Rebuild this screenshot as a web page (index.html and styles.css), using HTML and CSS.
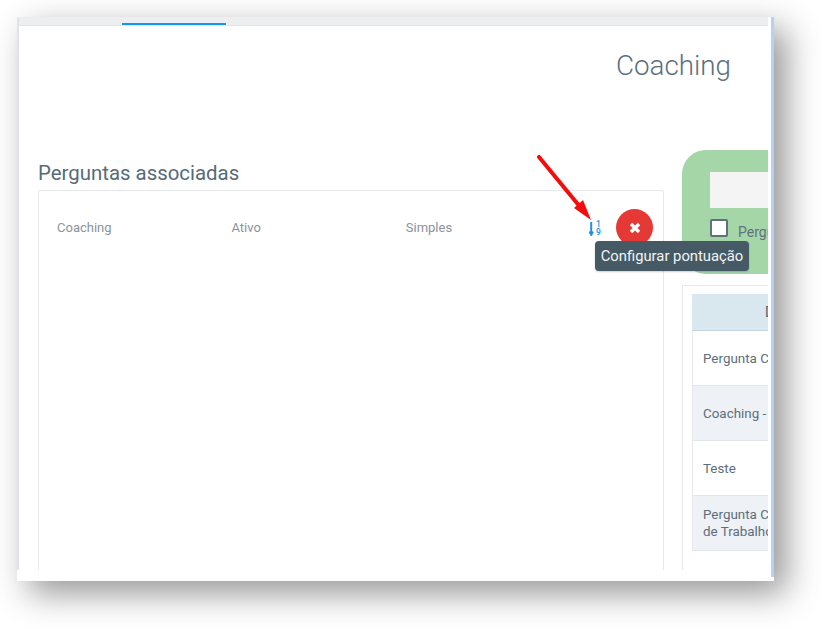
FILE: index.html
```html
<!DOCTYPE html>
<html lang="pt">
<head>
<meta charset="utf-8">
<title>Coaching</title>
<link rel="stylesheet" href="styles.css">
</head>
<body>
<div class="shot">
  <div class="page">
    <div class="tabs"><div class="tab-active"></div></div>
    <div class="title-row"><h1 class="title">Coaching</h1></div>
    <div class="columns">
      <section class="left">
        <h2 class="heading">Perguntas associadas</h2>
        <div class="card">
          <div class="row">
            <span class="cell">Coaching</span>
            <span class="cell">Ativo</span>
            <span class="cell">Simples</span>
            <svg class="sort-icon" width="14" height="16" viewBox="0 0 14 16">
              <path class="sort-arrow" d="M2.2 2V14.5M0.4 11.5L2.2 14.8L4 11.5"/>
              <text class="sort-num" x="7" y="6.5">1</text>
              <text class="sort-num" x="7" y="14.8">9</text>
            </svg>
            <button class="del" type="button">
              <svg width="12" height="12" viewBox="0 0 12 12"><path class="del-x" d="M2 2L10 10M10 2L2 10"/></svg>
            </button>
          </div>
        </div>
      </section>
      <section class="right">
        <div class="filter">
          <div class="filter-input"></div>
          <label class="check-row"><span class="check"></span><span class="check-label">Pergunta</span></label>
        </div>
        <div class="table-card">
          <div class="t-head">Descrição</div>
          <div class="t-row">Pergunta Coaching</div>
          <div class="t-row alt">Coaching - Teste</div>
          <div class="t-row">Teste</div>
          <div class="t-row alt">Pergunta Coaching<br>de Trabalho</div>
        </div>
      </section>
    </div>
    <div class="tooltip">Configurar pontuação</div>
    <svg class="arrow" width="60" height="70" viewBox="0 0 60 70">
      <path class="arrow-line" d="M2 2L44 53"/>
      <path class="arrow-head" d="M54 65L37 53L46 45Z"/>
    </svg>
  </div>
  <div class="edge"></div>
</div>
</body>
</html>
```
FILE: styles.css
```css
* { box-sizing: border-box; }
html, body { margin: 0; height: 100%; background: #fff; overflow: hidden; }
body { padding: 17px 0 0 17px; font-family: Roboto, "Liberation Sans", sans-serif; color: #6b7a85; }

.shot {
  display: flex;
  align-items: flex-start;
  width: 757px;
  height: 564px;
  background: #fff;
  box-shadow: 12px 12px 32px rgba(0, 0, 0, 0.42);
}
.page {
  position: relative;
  width: 751px;
  height: 553px;
  overflow: hidden;
  background: #fff;
  border-left: 2px solid #e2e3ea;
}
.edge {
  width: 3px;
  height: 560px;
  margin-left: 3px;
  background: #b9d0f5;
}

.tabs {
  height: 9px;
  background: #eceef0;
  border-bottom: 1px solid #e0e5ea;
  padding-left: 103px;
}
.tab-active { width: 104px; height: 8px; border-bottom: 2px solid #0f9af0; }

.title-row { display: flex; justify-content: flex-end; padding: 23px 37px 0 0; height: 124px; }
.title { margin: 0; font-size: 27.8px; line-height: 33px; font-weight: 300; color: #5c6f7d; }

.columns { display: flex; padding-left: 19px; gap: 18px; }
.left { width: 626px; flex: none; }
.heading { margin: 0 0 5px; padding-top: 11px; font-size: 20.4px; line-height: 24px; font-weight: 400; color: #566b78; }
.card {
  height: 400px;
  border: 1px solid #e6e9ec;
  border-radius: 2px;
  padding: 18px 10px 0 18px;
}
.row { display: flex; align-items: center; height: 37px; font-size: 13px; color: #8a949c; }
.cell { width: 174.4px; flex: none; }
.sort-icon { margin-left: 9px; flex: none; }
.sort-arrow { fill: none; stroke: #1e90e8; stroke-width: 2; }
.sort-num { font-size: 8.5px; font-weight: 500; fill: #1e90e8; font-family: Roboto, sans-serif; }
.del {
  width: 37px;
  height: 37px;
  margin-left: 13px;
  padding: 0;
  border: 0;
  border-radius: 50%;
  background: #e53935;
  display: flex;
  align-items: center;
  justify-content: center;
}
.del-x { stroke: #fff; stroke-width: 3.4; fill: none; }

.right { width: 200px; flex: none; }
.filter {
  height: 124px;
  padding: 22px 0 0 28px;
  background: #a5d6a7;
  border-radius: 24px 0 0 24px;
}
.filter-input { height: 36px; background: #f4f4f5; }
.check-row { display: flex; align-items: center; gap: 10px; margin-top: 11px; }
.check { width: 18px; height: 18px; background: #fff; border: 2px solid #5f717e; border-radius: 2px; flex: none; }
.check-label { font-size: 14px; color: #5f717e; line-height: 18px; position: relative; top: 4px; }

.table-card {
  margin-top: 11px;
  height: 300px;
  padding: 8px 0 0 9px;
  border: 1px solid #e6e9ec;
  white-space: nowrap;
  overflow: hidden;
}
.t-head {
  height: 37px;
  padding-left: 73px;
  line-height: 36px;
  font-size: 14px;
  background: #d9e7ee;
  border-bottom: 1px solid #c4d6df;
  color: #53636e;
}
.t-row {
  display: flex;
  align-items: center;
  height: 55px;
  padding: 0 0 0 10px;
  font-size: 13.4px;
  line-height: 17px;
  color: #5d6e7b;
  border-bottom: 1px solid #e0e6ec;
  border-left: 1px solid #e6e9ec;
}
.t-row.alt { background: #eef1f6; }

.tooltip {
  position: absolute;
  left: 576px;
  top: 224px;
  width: 154px;
  height: 30px;
  font-size: 14.8px;
  line-height: 30px;
  text-align: center;
  color: #f2f4f5;
  background: #455a64;
  border-radius: 4px;
  box-shadow: 0 1px 2px rgba(0, 0, 0, 0.2);
}
.arrow { position: absolute; left: 518px; top: 138px; }
.arrow-line { stroke: #f50d0d; stroke-width: 4; fill: none; stroke-linecap: round; }
.arrow-head { fill: #f50d0d; }
```
